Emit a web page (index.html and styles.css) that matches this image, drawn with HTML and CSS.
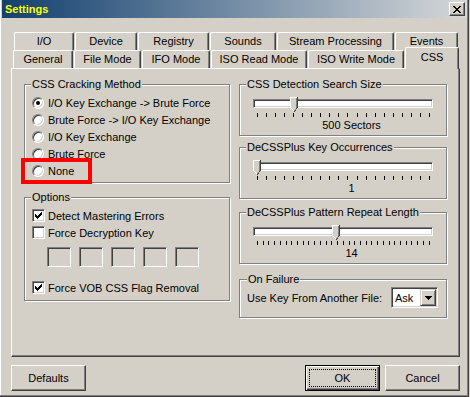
FILE: index.html
```html
<!DOCTYPE html>
<html>
<head>
<meta charset="utf-8">
<title>Settings</title>
<link rel="stylesheet" href="styles.css">
</head>
<body>
<div class="window">
  <div class="titlebar">
    <span class="title">Settings</span>
    <span class="close">
      <svg width="8" height="7" viewBox="0 0 8 7" shape-rendering="crispEdges">
        <path d="M0 0h2v1h-2z M6 0h2v1h-2z M1 1h2v1h-2z M5 1h2v1h-2z M2 2h4v1h-4z M3 3h2v1h-2z M2 4h4v1h-4z M1 5h2v1h-2z M5 5h2v1h-2z M0 6h2v1h-2z M6 6h2v1h-2z" fill="#000"/>
      </svg>
    </span>
  </div>

  <div class="tabs">
    <div class="tabrow back">
      <div class="tab w-io">I/O</div>
      <div class="tab w-device">Device</div>
      <div class="tab w-registry">Registry</div>
      <div class="tab w-sounds">Sounds</div>
      <div class="tab w-stream">Stream Processing</div>
      <div class="tab w-events">Events</div>
    </div>
    <div class="tabrow front">
      <div class="tab w-general">General</div>
      <div class="tab w-filemode">File Mode</div>
      <div class="tab w-ifo">IFO Mode</div>
      <div class="tab w-isoread">ISO Read Mode</div>
      <div class="tab w-isowrite">ISO Write Mode</div>
      <div class="tab w-css active">CSS</div>
    </div>
  </div>

  <div class="panel">
    <div class="col col-left">
      <fieldset class="group g-method">
        <legend>CSS Cracking Method</legend>
        <div class="opt"><span class="radio checked"></span>I/O Key Exchange -&gt; Brute Force</div>
        <div class="opt"><span class="radio"></span>Brute Force -&gt; I/O Key Exchange</div>
        <div class="opt"><span class="radio"></span>I/O Key Exchange</div>
        <div class="opt"><span class="radio"></span>Brute Force</div>
        <div class="opt marked"><span class="radio"></span>None<span class="mark"></span></div>
      </fieldset>

      <fieldset class="group g-options">
        <legend>Options</legend>
        <div class="opt"><span class="check"><svg width="13" height="13" viewBox="0 0 13 13" shape-rendering="crispEdges"><path d="M3 5h1v3h-1z M4 6h1v3h-1z M5 7h1v3h-1z M6 6h1v3h-1z M7 5h1v3h-1z M8 4h1v3h-1z M9 3h1v3h-1z" fill="#000"/></svg></span>Detect Mastering Errors</div>
        <div class="opt"><span class="check"></span>Force Decryption Key</div>
        <div class="keys">
          <span class="key"></span><span class="key"></span><span class="key"></span><span class="key"></span><span class="key"></span>
        </div>
        <div class="opt vob"><span class="check"><svg width="13" height="13" viewBox="0 0 13 13" shape-rendering="crispEdges"><path d="M3 5h1v3h-1z M4 6h1v3h-1z M5 7h1v3h-1z M6 6h1v3h-1z M7 5h1v3h-1z M8 4h1v3h-1z M9 3h1v3h-1z" fill="#000"/></svg></span>Force VOB CSS Flag Removal</div>
      </fieldset>
    </div>

    <div class="col col-right">
      <fieldset class="group g-slider g-search">
        <legend>CSS Detection Search Size</legend>
        <div class="slider">
          <div class="track"></div>
          <span class="thumb" style="left:37px"><svg width="8" height="15" viewBox="0 0 8 15" shape-rendering="crispEdges"><path d="M0 0h8v11l-4 4l-4-4z" fill="#d4d0c8"/><path d="M0 0h7v1h-6v10h-1z M1 11h1v1h-1z M2 12h1v1h-1z M3 13h1v1h-1z" fill="#fff"/><path d="M6 1h1v10h-1z M5 12h1v1h-1z M4 13h1v1h-1z" fill="#808080"/><path d="M7 0h1v11h-1z M6 11h1v1h-1z M5 13h1v1h-1z M4 14h1v1h-1z" fill="#404040"/></svg></span>
        </div>
        <div class="ticks"><i></i><i></i><i></i><i></i><i></i><i></i><i></i><i></i><i></i><i></i><i></i><i></i><i></i><i></i><i></i><i></i><i></i><i></i><i></i><i></i></div>
        <div class="value">500 Sectors</div>
      </fieldset>

      <fieldset class="group g-slider g-keyocc">
        <legend>DeCSSPlus Key Occurrences</legend>
        <div class="slider">
          <div class="track"></div>
          <span class="thumb" style="left:0px"><svg width="8" height="15" viewBox="0 0 8 15" shape-rendering="crispEdges"><path d="M0 0h8v11l-4 4l-4-4z" fill="#d4d0c8"/><path d="M0 0h7v1h-6v10h-1z M1 11h1v1h-1z M2 12h1v1h-1z M3 13h1v1h-1z" fill="#fff"/><path d="M6 1h1v10h-1z M5 12h1v1h-1z M4 13h1v1h-1z" fill="#808080"/><path d="M7 0h1v11h-1z M6 11h1v1h-1z M5 13h1v1h-1z M4 14h1v1h-1z" fill="#404040"/></svg></span>
        </div>
        <div class="ticks"><i></i><i></i><i></i><i></i><i></i><i></i><i></i><i></i><i></i><i></i><i></i><i></i><i></i><i></i><i></i><i></i><i></i><i></i><i></i><i></i></div>
        <div class="value">1</div>
      </fieldset>

      <fieldset class="group g-slider g-pattern">
        <legend>DeCSSPlus Pattern Repeat Length</legend>
        <div class="slider">
          <div class="track"></div>
          <span class="thumb" style="left:79px"><svg width="8" height="15" viewBox="0 0 8 15" shape-rendering="crispEdges"><path d="M0 0h8v11l-4 4l-4-4z" fill="#d4d0c8"/><path d="M0 0h7v1h-6v10h-1z M1 11h1v1h-1z M2 12h1v1h-1z M3 13h1v1h-1z" fill="#fff"/><path d="M6 1h1v10h-1z M5 12h1v1h-1z M4 13h1v1h-1z" fill="#808080"/><path d="M7 0h1v11h-1z M6 11h1v1h-1z M5 13h1v1h-1z M4 14h1v1h-1z" fill="#404040"/></svg></span>
        </div>
        <div class="ticks"><i></i><i></i><i></i><i></i><i></i><i></i><i></i><i></i><i></i><i></i><i></i><i></i><i></i><i></i><i></i><i></i><i></i><i></i><i></i><i></i><i></i><i></i><i></i><i></i><i></i><i></i><i></i><i></i><i></i><i></i><i></i></div>
        <div class="value">14</div>
      </fieldset>

      <fieldset class="group g-failure">
        <legend>On Failure</legend>
        <div class="failure-row">
          <span>Use Key From Another File:</span>
          <div class="combo">
            <span class="combo-text">Ask</span>
            <span class="combo-btn"><svg width="7" height="4" viewBox="0 0 7 4" shape-rendering="crispEdges"><path d="M0 0h7v1h-7z M1 1h5v1h-5z M2 2h3v1h-3z M3 3h1v1h-1z" fill="#000"/></svg></span>
          </div>
        </div>
      </fieldset>
    </div>
  </div>

  <div class="buttons">
    <button class="btn">Defaults</button>
    <button class="btn btn-default">OK</button>
    <button class="btn btn-cancel">Cancel</button>
  </div>
</div>
</body>
</html>
```

FILE: styles.css
```css
* { box-sizing: border-box; }

html, body {
  margin: 0;
  padding: 0;
  background: #d4d0c8;
}

body {
  font-family: "Liberation Sans", Arial, sans-serif;
  font-size: 11px;
  color: #000;
}

.window {
  width: 469px;
  height: 397px;
  background: #d4d0c8;
  border-right: 1px solid #404040;
  border-bottom: 1px solid #404040;
  box-shadow: inset -1px -1px 0 #808080, inset 1px 0 0 #ffffff;
  padding: 0 1px 0 2px;
  display: flex;
  flex-direction: column;
}

/* ---------- title bar ---------- */
.titlebar {
  height: 18px;
  flex: none;
  display: flex;
  align-items: center;
  padding-left: 3px;
  background: linear-gradient(to right, #12406f, #d6d8da);
}

.title {
  color: #ffff00;
  font-weight: bold;
  font-size: 11px;
  line-height: 13px;
}

.close {
  margin-left: auto;
  margin-right: 2px;
  width: 16px;
  height: 14px;
  display: flex;
  align-items: center;
  justify-content: center;
  background: #d4d0c8;
  border: 1px solid;
  border-color: #ffffff #404040 #404040 #ffffff;
  box-shadow: inset -1px -1px 0 #808080;
}

/* ---------- tabs ---------- */
.tabs {
  margin-top: 14px;
  flex: none;
}

.tabrow {
  display: flex;
  align-items: flex-start;
  height: 18px;
}

.tabrow.back { padding-left: 12px; }
.tabrow.front { padding-left: 11px; }

.tab {
  height: 18px;
  margin-right: 1px;
  display: flex;
  align-items: center;
  justify-content: center;
  line-height: 13px;
  white-space: nowrap;
  background: #d4d0c8;
  border-top: 1px solid #ffffff;
  border-left: 1px solid #ffffff;
  border-right: 1px solid #404040;
  border-radius: 2px 2px 0 0;
  box-shadow: inset -1px 0 0 #808080;
}

.w-io { width: 60px; }
.w-device { width: 62px; }
.w-registry { width: 71px; }
.w-sounds { width: 66px; }
.w-stream { width: 117px; }
.w-events { width: 63px; }

.w-general { width: 60px; }
.w-filemode { width: 67px; }
.w-ifo { width: 68px; }
.w-isoread { width: 96px; }
.w-isowrite { width: 96px; }
.w-css { width: 54px; }

.tab.active {
  position: relative;
  z-index: 1;
  height: 22px;
  margin-top: -3px;
  margin-right: 0;
  align-items: flex-start;
  padding-top: 3px;
}

/* ---------- panel ---------- */
.panel {
  flex: none;
  margin-left: 9px;
  width: 449px;
  height: 289px;
  border-top: 1px solid #ffffff;
  border-left: 1px solid #ffffff;
  border-right: 1px solid #404040;
  border-bottom: 1px solid #404040;
  box-shadow: inset -1px -1px 0 #808080;
  padding: 9px 0 0 12px;
  display: flex;
  gap: 8px;
}

.col {
  display: flex;
  flex-direction: column;
}

.col-left { width: 207px; }
.col-right { width: 209px; }

.group {
  margin: 0;
  width: calc(100% - 1px);
  min-width: 0;
  padding: 3px 0 3px 6px;
  border: 1px solid #808080;
  box-shadow: 1px 1px 0 #ffffff, inset 1px 1px 0 #ffffff;
}

.group legend {
  padding: 0 1px;
  margin-left: 0;
  font-size: 11px;
  line-height: 13px;
  background: #d4d0c8;
}

/* ---------- options / radios / checks ---------- */
.opt {
  display: flex;
  align-items: center;
  height: 17px;
  white-space: nowrap;
}

.radio {
  flex: none;
  width: 12px;
  height: 12px;
  margin: 0 4px 0 1px;
  border-radius: 50%;
  background: #ffffff;
  border: 1px solid;
  border-color: #808080 #ffffff #ffffff #808080;
  box-shadow: inset 1px 1px 0 #404040, inset -1px -1px 0 #d4d0c8;
  display: flex;
  align-items: center;
  justify-content: center;
}

.radio.checked::after {
  content: "";
  width: 4px;
  height: 4px;
  border-radius: 50%;
  background: #000;
}

.check {
  flex: none;
  width: 13px;
  height: 13px;
  margin: 0 3px 0 1px;
  background: #ffffff;
  border: 1px solid;
  border-color: #808080 #ffffff #ffffff #808080;
  box-shadow: inset 1px 1px 0 #404040, inset -1px -1px 0 #d4d0c8;
  position: relative;
}

.check svg {
  display: block;
  margin: -1px 0 0 -1px;
}

.marked { position: relative; }

.mark {
  position: absolute;
  left: -10px;
  top: -4px;
  width: 71px;
  height: 26px;
  border: 4px solid #ff0000;
}

.g-method { padding-bottom: 3px; }

.g-options {
  margin-top: 8px;
  padding-bottom: 4px;
}

.keys {
  display: flex;
  gap: 8px;
  margin: 6px 0 0 16px;
}

.key {
  width: 24px;
  height: 20px;
  background: #d4d0c8;
  border: 1px solid;
  border-color: #808080 #ffffff #ffffff #808080;
  box-shadow: inset 1px 1px 0 #404040, inset -1px -1px 0 #d4d0c8;
}

.opt.vob { margin-top: 12px; }

/* ---------- sliders ---------- */
.g-slider { padding-bottom: 3px; }
.g-keyocc { margin-top: 5px; }
.g-pattern { margin-top: 7px; }

.slider {
  position: relative;
  margin-left: 7px;
  width: 180px;
  padding-top: 5px;
}

.track {
  height: 9px;
  background: #ffffff;
  border: 1px solid;
  border-color: #808080 #ffffff #ffffff #808080;
  box-shadow: inset 1px 1px 0 #404040, inset -1px -1px 0 #d4d0c8;
}

.thumb {
  position: absolute;
  top: 3px;
  width: 8px;
  height: 15px;
}

.thumb svg { display: block; }

.ticks {
  display: flex;
  justify-content: space-between;
  margin: 5px 0 0 11px;
  width: 173px;
  height: 4px;
}

.ticks i {
  width: 1px;
  height: 4px;
  background: #000;
}

.value {
  margin: 2px 0 0 11px;
  text-align: center;
  line-height: 13px;
}

/* ---------- on failure ---------- */
.g-failure {
  margin-top: 9px;
  padding: 0 8px 9px 7px;
}

.failure-row {
  display: flex;
  align-items: center;
  margin-top: 1px;
  white-space: nowrap;
}

.combo {
  margin-left: auto;
  width: 47px;
  height: 21px;
  display: flex;
  align-items: center;
  background: #ffffff;
  border: 1px solid;
  border-color: #808080 #ffffff #ffffff #808080;
  box-shadow: inset 1px 1px 0 #404040, inset -1px -1px 0 #d4d0c8;
  padding: 1px;
}

.combo-text {
  flex: 1;
  padding-left: 2px;
}

.combo-btn {
  width: 16px;
  height: 17px;
  display: flex;
  align-items: center;
  justify-content: center;
  background: #d4d0c8;
  border: 1px solid;
  border-color: #d4d0c8 #404040 #404040 #d4d0c8;
  box-shadow: inset 1px 1px 0 #ffffff, inset -1px -1px 0 #808080;
}

.combo-btn svg { display: block; }

/* ---------- buttons ---------- */
.buttons {
  flex: none;
  display: flex;
  margin-top: 8px;
  padding: 0 7px 0 9px;
}

.btn {
  width: 75px;
  height: 26px;
  padding: 0;
  margin: 0;
  font: inherit;
  color: #000;
  background: #d4d0c8;
  display: flex;
  align-items: center;
  justify-content: center;
  border: 1px solid;
  border-color: #ffffff #404040 #404040 #ffffff;
  box-shadow: inset -1px -1px 0 #808080;
  border-radius: 0;
}

.btn-default {
  margin-left: auto;
  position: relative;
  border-color: #000;
  box-shadow: inset 1px 1px 0 #ffffff, inset -1px -1px 0 #404040, inset -2px -2px 0 #808080;
}

.btn-default::after {
  content: "";
  position: absolute;
  left: 3px;
  top: 3px;
  right: 3px;
  bottom: 3px;
  border: 1px dotted #000;
}

.btn-cancel { margin-left: 5px; }
```
